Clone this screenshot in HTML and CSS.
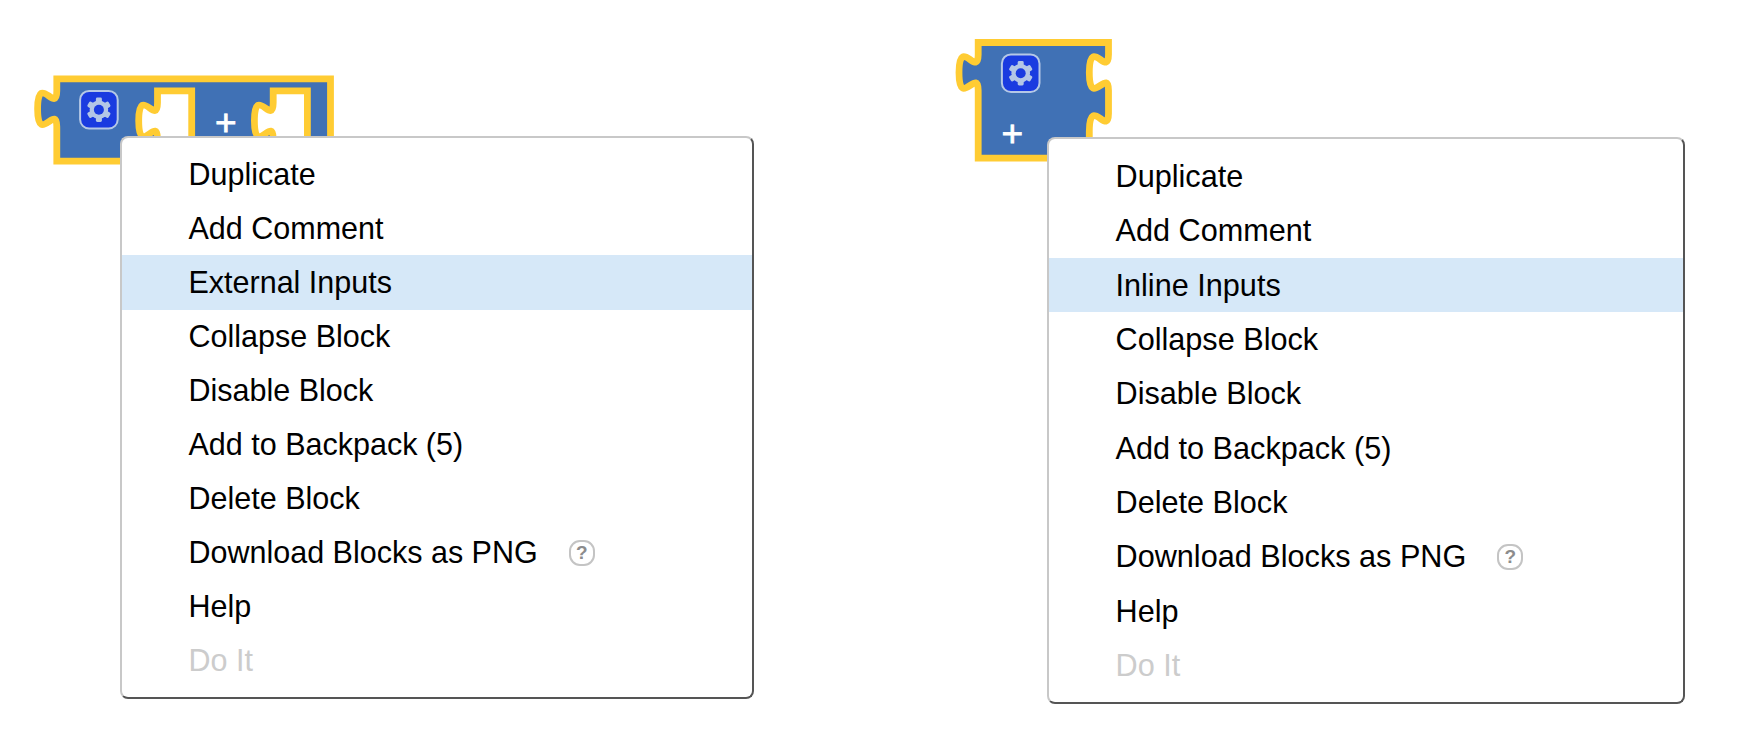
FILE: index.html
```html
<!DOCTYPE html>
<html lang="en">
<head>
<meta charset="utf-8">
<title>Block context menus</title>
<link rel="stylesheet" href="styles.css">
</head>
<body>
<main class="workspace">
  <svg class="blocks" width="1760" height="735" viewBox="0 0 1760 735">
    <defs>
      <g id="gear">
        <rect class="gear-box" x="-18.8" y="-18.8" width="37.6" height="37.6" rx="9"/>
        <g class="gear-wheel">
          <circle r="9.3"/>
          <g id="teeth">
            <rect x="-3" y="-12.2" width="6" height="24.4" rx="1.4"/>
            <rect x="-3" y="-12.2" width="6" height="24.4" rx="1.4" transform="rotate(60)"/>
            <rect x="-3" y="-12.2" width="6" height="24.4" rx="1.4" transform="rotate(120)"/>
          </g>
        </g>
        <circle class="gear-hole" r="5"/>
      </g>
      <path id="socket" class="socket" d="M0 0H34.2V58H0V48c0-24-18.8 19.2-18.8-18s18.8 6 18.8-18Z"/>
    </defs>

    <path class="block" d="M56.8 78.8H330.5V161.2H56.8V126.8c0-24-19.2 19.2-19.2-18s19.2 6 19.2-18Z"/>
    <use href="#gear" x="98.9" y="109.7"/>
    <use href="#socket" x="157.5" y="90.8"/>
    <text class="plus" x="225.7" y="134.8">+</text>
    <use href="#socket" x="273.2" y="90.8"/>

    <path class="block" d="M978.2 42.5H1108.5V54.5c0 24-19.2-19.2-19.2 18s19.2-6 19.2 18V113.5c0 24-19.2-19.2-19.2 18V158.2H978.2V90.5c0-24-19.2 19.2-19.2-18s19.2 6 19.2-18Z"/>
    <use href="#gear" x="1020.7" y="73.2"/>
    <text class="plus" x="1012.3" y="145.8">+</text>
  </svg>

  <ul class="menu menu-inline">
    <li class="item">Duplicate</li>
    <li class="item">Add Comment</li>
    <li class="item active">External Inputs</li>
    <li class="item">Collapse Block</li>
    <li class="item">Disable Block</li>
    <li class="item">Add to Backpack (5)</li>
    <li class="item">Delete Block</li>
    <li class="item">Download Blocks as PNG <span class="hint">?</span></li>
    <li class="item">Help</li>
    <li class="item disabled">Do It</li>
  </ul>

  <ul class="menu menu-external">
    <li class="item">Duplicate</li>
    <li class="item">Add Comment</li>
    <li class="item active">Inline Inputs</li>
    <li class="item">Collapse Block</li>
    <li class="item">Disable Block</li>
    <li class="item">Add to Backpack (5)</li>
    <li class="item">Delete Block</li>
    <li class="item">Download Blocks as PNG <span class="hint">?</span></li>
    <li class="item">Help</li>
    <li class="item disabled">Do It</li>
  </ul>
</main>
</body>
</html>
```
FILE: styles.css
```css
body {
  margin: 0;
  background: #fff;
  font-family: "Liberation Sans", Arial, sans-serif;
}

.workspace {
  position: relative;
  width: 1760px;
  height: 735px;
  overflow: hidden;
}

.blocks {
  display: block;
}

.block {
  fill: #4071b5;
  stroke: #fc3;
  stroke-width: 6.8;
}

.socket {
  fill: #fff;
  stroke: #fc3;
  stroke-width: 6.8;
}

.gear-box {
  fill: #1a3be0;
  stroke: #b5c8e6;
  stroke-width: 2;
}

.gear-wheel {
  fill: #b3c6e6;
}

.gear-hole {
  fill: #1a3be0;
}

.plus {
  fill: #fff;
  stroke: #fff;
  stroke-width: 0.8;
  font-size: 37px;
  text-anchor: middle;
}

/* Context menus float over the blocks they belong to. */
.menu {
  position: absolute;
  box-sizing: border-box;
  margin: 0;
  padding: 9.4px 0 0;
  list-style: none;
  background: #fff;
  border: 2px solid;
  border-color: #c8c8c8 #555 #555 #c8c8c8;
  border-radius: 8px;
}

.menu-inline {
  left: 120px;
  top: 136px;
  width: 634px;
  height: 563px;
  font-size: 30.5px;
  --row: 54.05px;
}

.menu-external {
  left: 1047px;
  top: 137px;
  width: 638px;
  height: 567px;
  padding-top: 10.2px;
  font-size: 30.65px;
  --row: 54.35px;
}

.item {
  display: flex;
  align-items: center;
  gap: 31px;
  height: var(--row);
  padding-left: 66.5px;
  color: #000;
  white-space: nowrap;
}

.item.active {
  background: #d6e8f8;
}

.item.disabled {
  color: #ccc;
}

.hint {
  box-sizing: border-box;
  width: 26px;
  height: 26px;
  border: 2px solid #c4c4c4;
  border-radius: 11px;
  color: #8c8c8c;
  font-size: 19px;
  font-weight: bold;
  line-height: 22px;
  text-align: center;
}
```
